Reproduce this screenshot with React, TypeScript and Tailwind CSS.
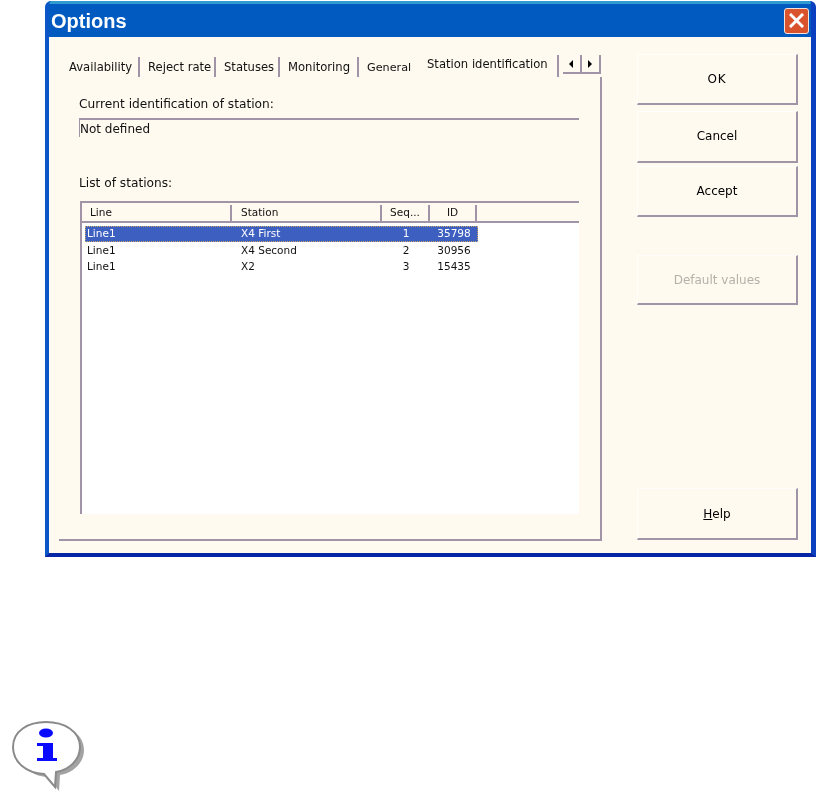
import React from 'react';

const rows = [
  { line: 'Line1', station: 'X4 First', seq: '1', id: '35798' },
  { line: 'Line1', station: 'X4 Second', seq: '2', id: '30956' },
  { line: 'Line1', station: 'X2', seq: '3', id: '15435' },
];

const tabs = [
  { label: 'Availability', width: 'w-[77px]', pad: 'pl-[6px]' },
  { label: 'Reject rate', width: 'w-[76px]', pad: 'pl-[8px]' },
  { label: 'Statuses', width: 'w-[64px]', pad: 'pl-[8px]' },
  { label: 'Monitoring', width: 'w-[79px]', pad: 'pl-[8px]' },
];

const DlgButton: React.FC<{ className?: string; disabled?: boolean; children: React.ReactNode }> = ({ className, disabled, children }) => (
  <div
    className={`w-[161px] flex items-center justify-center text-[12px] border-r-2 border-b-2 border-r-[#a094a6] border-b-[#a094a6] border-t border-l border-t-[#fffefb] border-l-[#fffefb] ${
      disabled ? 'text-[#b4b0aa]' : 'text-black'
    } ${className}`}
  >
    {children}
  </div>
);

const InfoIcon = () => (
  <svg width="76" height="72" viewBox="0 0 76 72" className="block">
    <path
      d="M2 27 C2 11 17 2 35 2 C53 2 69 11 69 27 C69 40 58 50 45 52 L44 68 L33 54 C15 53 2 42 2 27 Z"
      fill="#8c8c8c"
      transform="translate(4 3)"
      opacity="0.8"
    />
    <path
      d="M2 27 C2 11 17 2 35 2 C53 2 69 11 69 27 C69 40 58 50 45 52 L44 67 L33 54 C15 53 2 42 2 27 Z"
      fill="#ffffff"
      stroke="#8a8a8a"
      strokeWidth="2"
    />
    <ellipse cx="35" cy="13" rx="7" ry="4.5" fill="#0a0aff" />
    <path d="M26 23 H42 V38 H46 V41 H26 V38 H32 V26 H26 Z" fill="#0a0aff" />
  </svg>
);

export default function App() {
  return (
    <div className="w-[816px] h-[798px] bg-white overflow-hidden font-['DejaVu_Sans',sans-serif] text-[10.5px] text-[#111]">
      <div className="mt-[1px] ml-[45px] w-[771px] h-[556px] flex flex-col rounded-t-[6px] overflow-hidden bg-[#0058bd] border-l-[4px] border-r-[5px] border-b-[4px] border-l-[#0a55c8] border-r-[#0a3fc0] border-b-[#0626a5] blur-[0.3px]">
        <div className="h-[36px] flex-none flex items-center justify-between border-t-[3px] border-t-[#2f9bd0] bg-[#005ac0] pl-[2px] pr-[2px]">
          <span className="text-white text-[20px] font-bold font-['Liberation_Sans',sans-serif] leading-none">Options</span>
          <span className="w-[25px] h-[26px] rounded-[3px] border border-[#f4e4dc] bg-[#d9532c] flex items-center justify-center">
            <svg width="15" height="15" viewBox="0 0 15 15">
              <path d="M2 2 L13 13 M13 2 L2 13" stroke="#fff" strokeWidth="3" strokeLinecap="square" />
            </svg>
          </span>
        </div>

        <div className="flex-1 flex bg-[#fffaf0] pl-[10px]">
          <div className="w-[543px] flex-none pt-[18px]">
            <div className="h-[22px] flex pl-[4px] text-[11.6px]">
              {tabs.map((t) => (
                <div key={t.label} className={`${t.width} ${t.pad} h-[20px] mt-[2px] pt-[2px] flex items-center whitespace-nowrap border-r-2 border-r-[#a094a6]`}>
                  {t.label}
                </div>
              ))}
              <div className="w-[59px] h-[20px] mt-[2px] pt-[2px] pl-[8px] flex items-center text-[11.2px]">General</div>
              <div className="w-[141px] h-[22px] pl-[9px] pb-[3px] flex items-center whitespace-nowrap border-r-2 border-r-[#a094a6]">
                Station identification
              </div>
              <div className="ml-[4px] flex h-[19px]">
                <div className="w-[19px] flex items-center justify-center border-r-2 border-b-2 border-[#a094a6]">
                  <svg width="5" height="8" viewBox="0 0 5 8"><path d="M4 0 V8 L0 4 Z" fill="#000" /></svg>
                </div>
                <div className="w-[19px] flex items-center justify-center border-r-2 border-b-2 border-[#a094a6]">
                  <svg width="5" height="8" viewBox="0 0 5 8"><path d="M0 0 V8 L4 4 Z" fill="#000" /></svg>
                </div>
              </div>
            </div>

            <div className="h-[464px] border-r-2 border-b-2 border-[#a094a6] pl-[20px] pr-[21px] flex flex-col">
              <div className="h-[14px] mt-[20px] flex items-center text-[12.2px]">Current identification of station:</div>
              <div className="h-[19px] mt-[7px] border-t-2 border-l border-t-[#a094a6] border-l-[#a094a6] flex items-center text-[12px]">Not defined</div>
              <div className="h-[14px] mt-[39px] flex items-center text-[12.2px]">List of stations:</div>
              <div className="h-[313px] mt-[11px] ml-[1px] border-t-2 border-l-2 border-[#a094a6] bg-white flex flex-col">
                <div className="h-[20px] flex-none flex bg-[#fffaf0] border-b-2 border-b-[#a094a6] pt-[2px]">
                  <div className="w-[150px] pl-[8px] flex items-center border-r-2 border-r-[#a094a6]">Line</div>
                  <div className="w-[150px] pl-[9px] flex items-center border-r-2 border-r-[#a094a6]">Station</div>
                  <div className="w-[48px] flex items-center justify-center border-r-2 border-r-[#a094a6]">Seq...</div>
                  <div className="w-[47px] flex items-center justify-center border-r-2 border-r-[#a094a6]">ID</div>
                </div>
                <div className="pt-[3px] pl-[3px]">
                  {rows.map((r, i) => (
                    <div
                      key={r.id}
                      className={`w-[393px] h-[16px] flex items-center ${i === 1 ? 'mt-[1px]' : ''} ${
                        i === 0 ? 'bg-[#3d5fbf] text-white outline-1 -outline-offset-1 outline-dotted outline-[#c9a96a]' : 'text-[#111]'
                      }`}
                    >
                      <span className="w-[155px] pl-[2px]">{r.line}</span>
                      <span className="w-[142px] pl-[1px] whitespace-nowrap">{r.station}</span>
                      <span className="w-[48px] text-center">{r.seq}</span>
                      <span className="w-[48px] text-center">{r.id}</span>
                    </div>
                  ))}
                </div>
              </div>
            </div>
          </div>

          <div className="ml-[35px] pt-[17px] flex flex-col">
            <DlgButton className="h-[51px] tracking-[0.8px] pb-[1px]">OK</DlgButton>
            <DlgButton className="h-[52px] mt-[6px] pb-[1px]">Cancel</DlgButton>
            <DlgButton className="h-[51px] mt-[3px]">Accept</DlgButton>
            <DlgButton className="h-[50px] mt-[38px] pt-[1px]" disabled>Default values</DlgButton>
            <DlgButton className="h-[52px] mt-[183px] pt-[1px]">
              <span><span className="underline">H</span>elp</span>
            </DlgButton>
          </div>
        </div>
      </div>

      <div className="ml-[11px] mt-[163px] blur-[0.4px]">
        <InfoIcon />
      </div>
    </div>
  );
}
